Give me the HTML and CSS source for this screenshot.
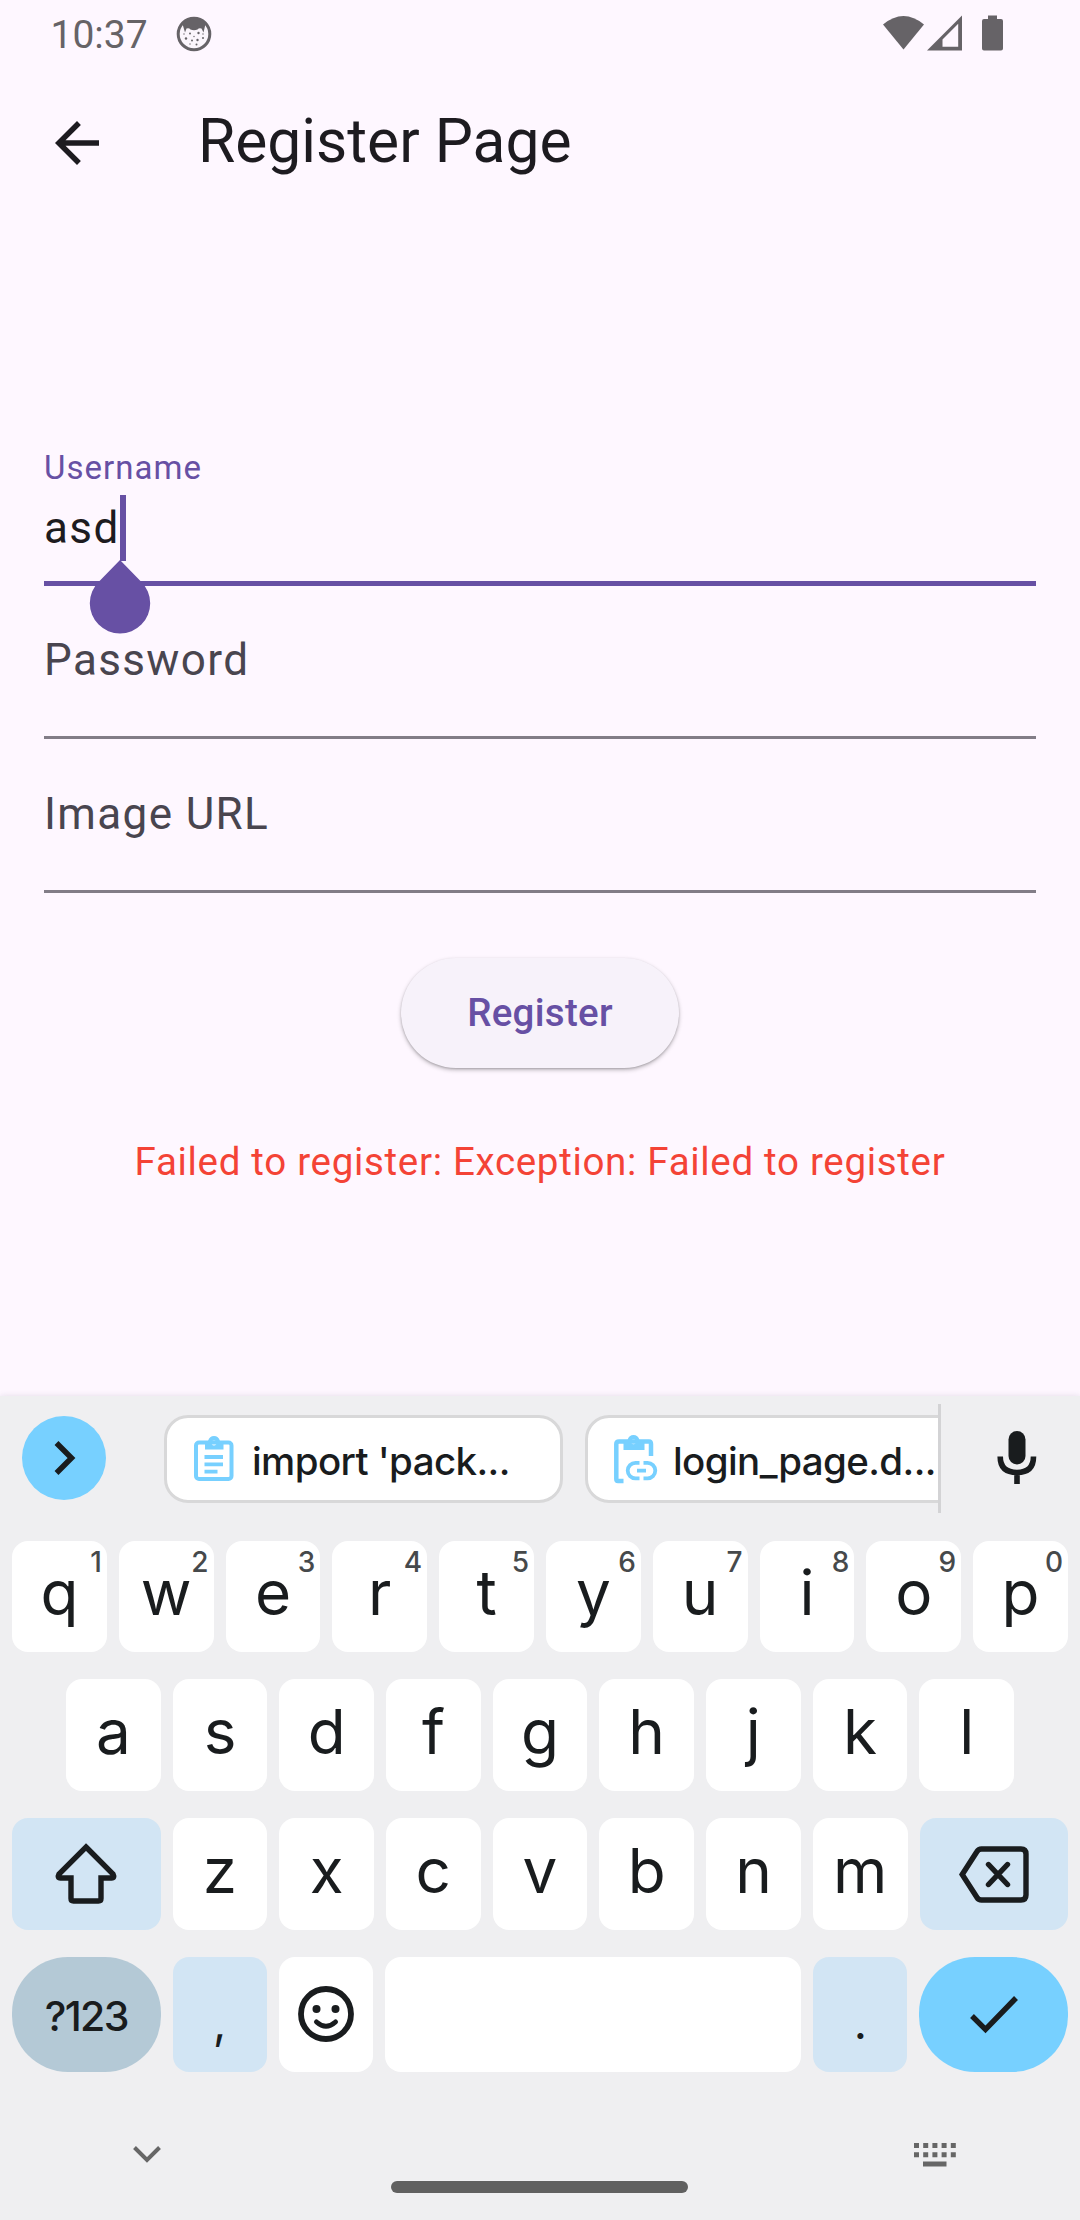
FILE: index.html
```html
<!DOCTYPE html>
<html lang="en">
<head>
<meta charset="utf-8">
<title>Register Page</title>
<link rel="stylesheet" href="styles.css">
</head>
<body>
<div class="screen">
  <header class="status">
    <span class="clock">10:37</span>
    <svg class="cat" width="36" height="36" viewBox="0 0 36 36"><circle cx="18" cy="18" r="15.8" fill="#fbf6fc" stroke="#666367" stroke-width="3"/><path d="M6.5 8Q18-3 29.500 8L27.500 16.500L25.500 12.500Q23 11.500 21.500 13.500Q18 15 14.500 13.500Q13 11.500 10.500 12.500L9 16.500Z" fill="#666367"/><g fill="#666367"><circle cx="14" cy="17.500" r="1"/><circle cx="22.500" cy="17" r="1.200"/><circle cx="10" cy="22.500" r="1.200"/><circle cx="16" cy="24.500" r="1"/><circle cx="21.500" cy="24" r="1.200"/><circle cx="27" cy="22" r="1"/><circle cx="20.500" cy="28.500" r="1"/><circle cx="14" cy="28" r=".7"/><circle cx="8" cy="18" r=".7"/><circle cx="18" cy="20.500" r=".7"/><circle cx="27" cy="18" r=".7"/></g></svg>
    <svg class="signals" width="122" height="38" viewBox="0 0 122 38"><g fill="#666367"><path d="M0 9.500Q20.500-7.500 41 9.500L20.500 34.500Z"/><path fill-rule="evenodd" d="M44 35.500L79 .500V35.500ZM59.500 24.500V31.800H75.200V8.800Z"/><path d="M105 .500H114V4H118Q120 4 120 6V33.500Q120 35.500 118 35.500H101Q99 35.500 99 33.500V6Q99 4 101 4H105Z"/></g></svg>
  </header>
  <div class="appbar">
    <svg class="back" width="66" height="66" viewBox="0 0 24 24"><path fill="#1d1b20" d="M20 11H7.830l5.590-5.590L12 4l-8 8 8 8 1.410-1.410L7.830 13H20v-2z"/></svg>
    <h1 class="title">Register Page</h1>
  </div>
  <main class="form">
    <div class="field focused">
      <label class="float">Username</label>
      <div class="value">asd<span class="caret"></span>
        <svg class="handle" width="62" height="74" viewBox="0 0 62 74"><path fill="#6750a4" d="M31 0L52.200 21.800A30.200 30.200 0 1 1 9.800 21.800Z"/></svg>
      </div>
    </div>
    <div class="field"><label class="hint">Password</label></div>
    <div class="field"><label class="hint">Image URL</label></div>
    <button class="submit">Register</button>
    <p class="error">Failed to register: Exception: Failed to register</p>
  </main>
  <section class="keyboard">
    <div class="strip">
      <div class="expand"><svg width="84" height="84" viewBox="0 0 84 84"><path d="M34.500 27L49.500 42L34.500 57" fill="none" stroke="#191c1e" stroke-width="5.500"/></svg></div>
      <div class="chips">
        <div class="chip first">
          <svg width="40" height="46" viewBox="0 0 40 46"><rect x="2" y="6.500" width="35.500" height="36.500" rx="3" fill="none" stroke="#77d0ff" stroke-width="4"/><path fill="#77d0ff" fill-rule="evenodd" d="M11 5H14Q15.500 0 20 0Q24.500 0 26 5H29.500V13.500H11ZM20 4.500a2.500 2.500 0 1 0 .01 0Z"/><path d="M10.500 21H29M10.500 28.300H29M10.500 35.700H23.500" stroke="#77d0ff" stroke-width="3.800"/></svg>
          <span class="clip one">import 'pack...</span>
        </div>
        <div class="chip second">
          <svg width="45" height="49" viewBox="0 0 45 49"><path fill="none" stroke="#77d0ff" stroke-width="4.500" d="M9.500 46H4Q2.300 46 2.300 44V9Q2.300 6.500 5 6.500H35Q37 6.500 37 9V21"/><path fill="#77d0ff" fill-rule="evenodd" d="M9.500 5H13.500Q15 0 19.500 0Q24 0 25.500 5H30.500V15H9.500ZM19.500 4.300a2.500 2.500 0 1 0 .01 0Z"/><path fill="none" stroke="#77d0ff" stroke-width="3.800" d="M25.500 27.800H21.500A7.700 7.700 0 0 0 21.500 43.400H25.500M29.500 27.800H33.500A7.700 7.700 0 0 1 33.500 43.400H29.500M23 35.600H32"/></svg>
          <span class="clip two">login_page.d...</span>
        </div>
      </div>
      <svg class="mic" width="40" height="54" viewBox="0 0 40 54"><rect x="11.500" y="0" width="17" height="33.500" rx="8.500" fill="#191c1e"/><path d="M3.200 25.500Q3.200 41.500 20 41.500Q36.500 41.500 36.500 25.500M20 41V53" fill="none" stroke="#191c1e" stroke-width="5.600"/></svg>
    </div>
    <div class="row top">
      <div class="key">q<sup>1</sup></div><div class="key">w<sup>2</sup></div><div class="key">e<sup>3</sup></div><div class="key">r<sup>4</sup></div><div class="key">t<sup>5</sup></div><div class="key">y<sup>6</sup></div><div class="key">u<sup>7</sup></div><div class="key">i<sup>8</sup></div><div class="key">o<sup>9</sup></div><div class="key">p<sup>0</sup></div>
    </div>
    <div class="row middle">
      <div class="key">a</div><div class="key">s</div><div class="key">d</div><div class="key">f</div><div class="key">g</div><div class="key">h</div><div class="key">j</div><div class="key">k</div><div class="key">l</div>
    </div>
    <div class="row">
      <div class="key wide tint"><svg width="62" height="62" viewBox="0 0 62 62"><path d="M31 4L58 31Q60 35 56.500 35H46V55.500Q46 58 43.500 58H18.500Q16 58 16 55.500V35H5.500Q2 35 4 31Z" fill="none" stroke="#191c1e" stroke-width="5.400"/></svg></div>
      <div class="key">z</div><div class="key">x</div><div class="key">c</div><div class="key">v</div><div class="key">b</div><div class="key">n</div><div class="key">m</div>
      <div class="key wide tint"><svg width="70" height="57" viewBox="0 0 70 57"><path d="M3.200 28.500L18 5.500Q19.500 3 22.500 3H62Q67 3 67 8V49Q67 54 62 54H22.500Q19.500 54 18 51.500Z" fill="none" stroke="#191c1e" stroke-width="5.400"/><path d="M29.500 18.500L48.500 38.500M48.500 18.500L29.500 38.500" stroke="#191c1e" stroke-width="5.400" stroke-linecap="round"/></svg></div>
    </div>
    <div class="row bottom">
      <div class="key wide symbols">?123</div>
      <div class="key tint punct">,</div>
      <div class="key emoji"><svg width="56" height="56" viewBox="0 0 56 56"><circle cx="28" cy="28" r="25" fill="none" stroke="#191c1e" stroke-width="5.800"/><circle cx="18.500" cy="23" r="4" fill="#191c1e"/><circle cx="37.500" cy="23" r="4" fill="#191c1e"/><path d="M18.500 36Q28 44.500 37.500 36" fill="none" stroke="#191c1e" stroke-width="5" stroke-linecap="round"/></svg></div>
      <div class="key space"></div>
      <div class="key tint punct">.</div>
      <div class="key wide enter"><svg width="50" height="40" viewBox="0 0 50 40"><path d="M3 21L16.500 34.500L47 3" fill="none" stroke="#191c1e" stroke-width="5.400"/></svg></div>
    </div>
    <footer class="nav">
      <svg class="down" width="28" height="18" viewBox="0 0 28 18"><path d="M1.500 1.500L14 14L26.500 1.500" fill="none" stroke="#666" stroke-width="4"/></svg>
      <div class="pill"></div>
      <svg class="switch" width="43" height="24" viewBox="0 0 43 24"><path d="M0 2.500H43M0 11.700H43" stroke="#666" stroke-width="5" stroke-dasharray="5 4.200"/><path d="M9 21H32.500" stroke="#666" stroke-width="5"/></svg>
    </footer>
  </section>
</div>
</body>
</html>
```
FILE: styles.css
```css
* { box-sizing: border-box; }
body { margin: 0; background: #fef7ff; font-family: Roboto, sans-serif; }
svg { display: block; flex: none; }
.screen { width: 1080px; height: 2220px; display: flex; flex-direction: column; overflow: hidden; }

.status { height: 66px; padding: 0 75px 0 50.5px; display: flex; align-items: center; color: #666367; }
.clock { font-size: 39px; line-height: 46px; width: 125px; padding-top: 4px; }
.cat { margin-top: 1px; }
.signals { margin: 1px 0 0 auto; }

.appbar { height: 154px; padding-left: 44px; display: flex; align-items: center; }
.title { margin: 0 0 3px 88px; font-size: 60.5px; line-height: 77px; font-weight: 400; color: #1d1b20; white-space: nowrap; }

.form { height: 1176px; padding: 212px 44px 0; display: flex; flex-direction: column; }
.field { height: 154px; padding-top: 42px; border-bottom: 3px solid #827d87; color: #49454f; }
.focused + .field { height: 153px; padding-top: 41px; }
.hint { display: block; font-size: 44px; line-height: 66px; letter-spacing: 1.375px; }
.focused { padding-top: 16px; border-bottom: 5.5px solid #6750a4; }
.float { display: block; height: 47px; font-size: 33px; line-height: 40px; letter-spacing: 1.03px; color: #6750a4; }
.value { position: relative; display: flex; width: max-content; height: 66px; font-size: 44px; line-height: 66px; letter-spacing: 1.375px; color: #1d1b20; }
.caret { width: 6px; height: 66px; background: #6750a4; }
.handle { position: absolute; right: -25px; top: 65px; }
.submit { width: 278px; height: 110px; margin: 64.5px auto 0; padding: 0; border: 0; border-radius: 55px; background: #f7f2fa; box-shadow: 0 2px 4px rgba(0,0,0,.25), 0 1px 2px rgba(0,0,0,.15); color: #6750a4; font: 500 38.5px/55px Roboto, sans-serif; letter-spacing: .275px; }
.error { margin: 66.5px 0 0; font-size: 38.5px; line-height: 55px; letter-spacing: .6875px; text-align: center; white-space: nowrap; color: #f44336; }

.keyboard { height: 824px; background: #efeff1; box-shadow: 0 0 6px rgba(90,80,110,.16); font-family: Inter, sans-serif; color: #191c1e; display: flex; flex-direction: column; }
.strip { height: 145px; padding: 8px 0 0 22px; display: flex; align-items: flex-start; }
.expand { width: 84px; height: 84px; margin-top: 12px; border-radius: 50%; background: #77d0ff; }
.chips { width: 835px; height: 109px; padding: 11px 0 0 58px; display: flex; gap: 22px; overflow: hidden; border-right: 3px solid #d3d3d5; }
.chip { flex: none; width: 399px; height: 88px; border: 3px solid #d8d8d9; border-radius: 24px; background: #fff; display: flex; align-items: center; }
.first { padding-left: 27px; }
.second { padding-left: 26px; }
.clip { padding-top: 3px; font-size: 38.5px; line-height: 50px; font-weight: 500; white-space: nowrap; }
.one { margin-left: 18px; letter-spacing: -.6px; }
.two { margin-left: 14px; letter-spacing: -.6px; }
.mic { margin: 27px 0 0 56px; }

.row { height: 112px; margin: 0 12px 27px; display: flex; gap: 12px; }
.top { height: 111px; }
.middle { margin-left: 66px; margin-right: 66px; }
.bottom { height: 115px; margin-bottom: 0; }
.key { position: relative; flex: 1 1 0; min-width: 0; border-radius: 16px; background: #fff; display: flex; align-items: center; justify-content: center; font-size: 62px; line-height: 74px; padding-bottom: 7px; }
.key sup { position: absolute; right: 5px; top: 4px; font-size: 28px; line-height: 34px; font-weight: 500; color: #46494b; }
.wide { flex: none; width: 148.500px; padding-bottom: 0; }
.tint { background: #d2e5f4; }
.symbols { border-radius: 56px; background: #b4c9d6; font-size: 41px; font-weight: 500; letter-spacing: -1.7px; padding-top: 2px; }
.punct { font-size: 46px; padding: 14px 0 0; }
.emoji { padding-bottom: 1px; }
.space { flex: none; width: 416px; }
.enter { border-radius: 56px; background: #77d0ff; }

.nav { height: 148px; padding: 71px 123px 0 133px; display: flex; justify-content: space-between; align-items: flex-start; }
.down { margin-top: 3px; }
.pill { width: 297px; height: 12px; margin: 38px 0 0 4px; border-radius: 6px; background: #606060; }
```
